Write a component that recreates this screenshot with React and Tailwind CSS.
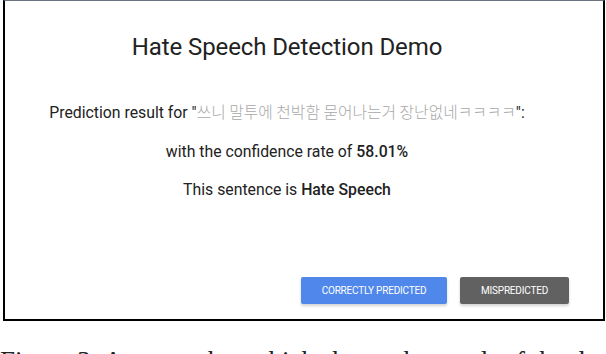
import React from 'react';

const roboto = { fontFamily: 'Roboto, "Noto Sans CJK KR", sans-serif' };

export default function App() {
  return (
    <div className="w-[606px] h-[354px] bg-white overflow-hidden" style={roboto}>
      <div className="ml-[3px] w-[602px] h-[321px] border-x-2 border-b-2 border-black border-t border-t-gray-500 flex flex-col">
        <div className="w-[564px] flex flex-col items-center text-[#222]">
          <h1 className="mt-[31px] text-[24px] leading-[30px] font-normal tracking-[-0.1px]">Hate Speech Detection Demo</h1>
          <p className="mt-[40px] text-[15.8px] leading-[20px] text-[#222]">
            Prediction result for "<span className="text-[#a8a8a8] font-light" style={{ fontFamily: '"Noto Sans CJK KR", sans-serif' }}>쓰니 말투에 천박함 묻어나는거 장난없네ㅋㅋㅋㅋ</span>":
          </p>
          <p className="mt-[19px] text-[15.8px] leading-[20px]">
            with the confidence rate of <span className="font-medium">58.01%</span>
          </p>
          <p className="mt-[18px] text-[15.8px] leading-[20px]">
            This sentence is <span className="font-medium">Hate Speech</span>
          </p>
        </div>
        <div className="mt-auto mb-[15px] flex justify-end gap-[13px] pr-[34px]">
          <button className="w-[146px] h-[27px] rounded-[2px] bg-[#4f87ea] text-white text-[10px] uppercase tracking-[-0.2px] shadow-[0_2px_3px_rgba(0,0,0,0.18)]">
            Correctly Predicted
          </button>
          <button className="w-[109px] h-[27px] rounded-[2px] bg-[#616161] text-white text-[10px] uppercase tracking-[-0.2px] shadow-[0_2px_3px_rgba(0,0,0,0.18)]">
            Mispredicted
          </button>
        </div>
      </div>
      <p className="mt-[25px] text-[27px] leading-[30px] text-[#222] whitespace-nowrap" style={{ fontFamily: '"Liberation Serif", serif' }}>
        Figure 3: A screenshot which shows the result of the demo
      </p>
    </div>
  );
}
